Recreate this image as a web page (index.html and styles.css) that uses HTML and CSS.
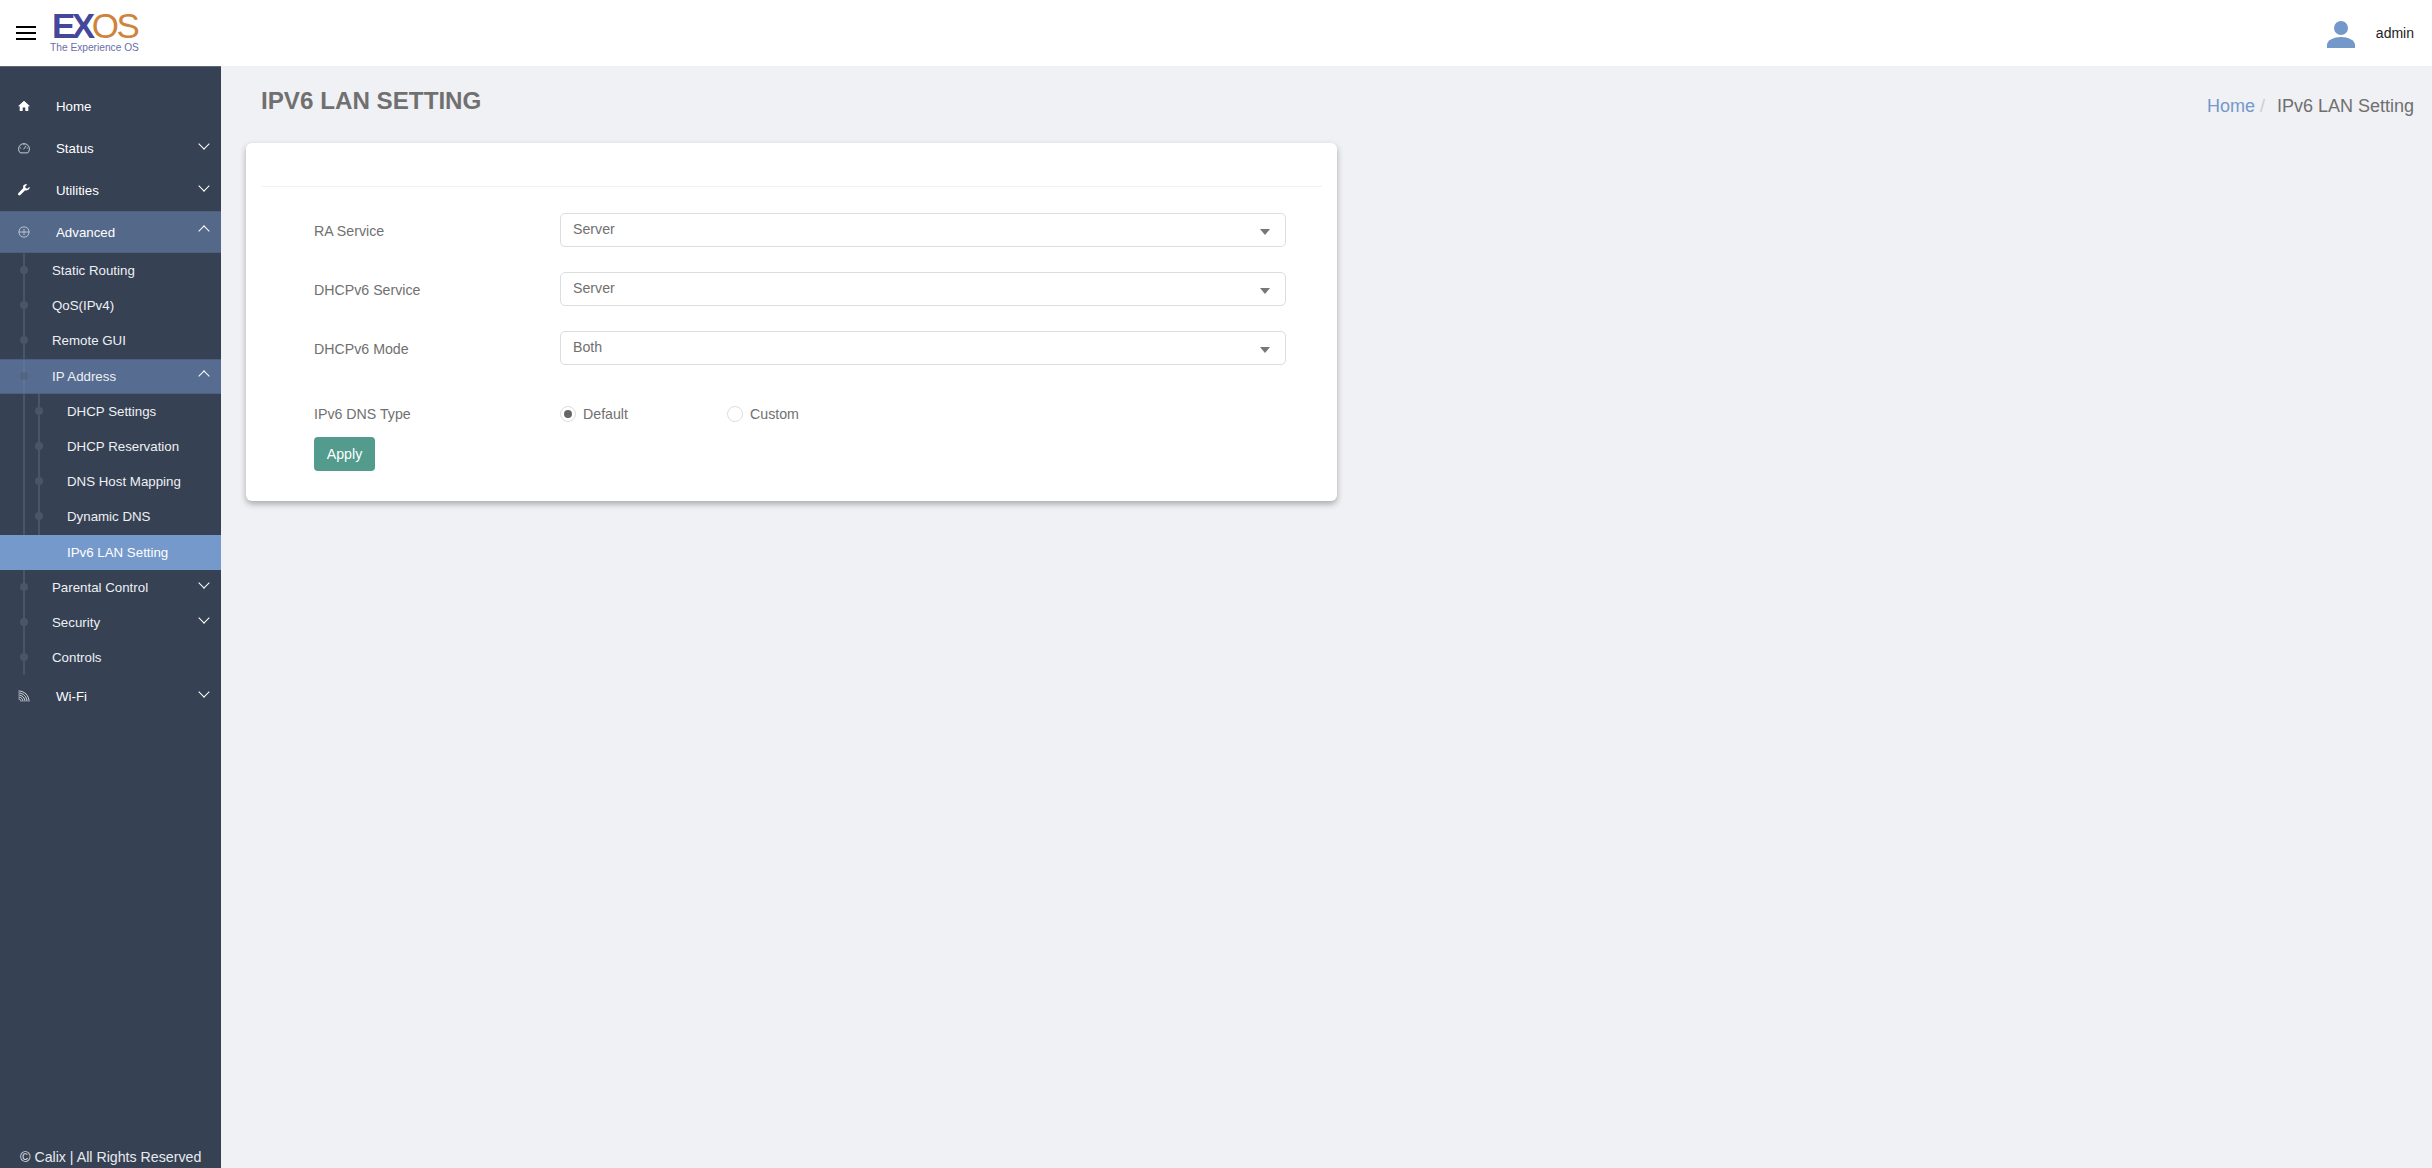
FILE: index.html
```html
<!DOCTYPE html>
<html lang="en">
<head>
    <meta charset="UTF-8">
    <title>IPv6 LAN Setting</title>
    <link rel="stylesheet" href="styles.css">
</head>
<body>
    <div class="topbar">
        <div class="burger"><span></span><span></span><span></span></div>
        <div class="logo">
            <div class="logoName"><b>EX</b><span>OS</span></div>
            <div class="logoTag">The Experience OS</div>
        </div>
        <div class="user">
            <svg class="userIcon" viewBox="0 0 28 28" width="28" height="28">
                <circle cx="14" cy="8" r="7" fill="#7398c9"/>
                <path d="M0 28v-3c0-5 7-8 14-8s14 3 14 8v3z" fill="#7398c9"/>
            </svg>
            <span class="userName">admin</span>
        </div>
    </div>
    <div class="layout">
        <div class="sidebar">
            <ul class="menu">
                <li class="item">
                    <svg class="icon" viewBox="0 0 12 12"><path d="M6 .8L0 6.200h1.700V11h3V7.600h2.600V11h3V6.200H12z" fill="#fff"/></svg>
                    <span>Home</span>
                </li>
                <li class="item">
                    <svg class="icon" viewBox="0 0 14 14" fill="none" stroke="#dfe3e8" stroke-width="1"><path d="M2.600 12.700a6.300 6.300 0 1 1 8.800 0z"/><path d="M6.500 8.500l3-4"/><path d="M2.500 7h1.200M10.300 7h1.200M7 2.500v1.200"/></svg>
                    <span>Status</span>
                    <i class="chev"></i>
                </li>
                <li class="item">
                    <svg class="icon" viewBox="0 0 14 14"><path d="M13.400 3.200l-2.500 2.200-2-.6-.5-2L10.800.6C9-.2 7 .4 6.200 2c-.4 1-.4 1.900 0 2.800L.6 10.600c-.8.800-.7 1.700-.1 2.300s1.600.7 2.300 0l5.600-5.700c1 .4 2 .4 3-.1 1.700-.8 2.500-2.400 2-3.900z" fill="#fff"/></svg>
                    <span>Utilities</span>
                    <i class="chev"></i>
                </li>
                <li class="item open">
                    <svg class="icon" viewBox="0 0 14 14" fill="none" stroke="#c9d1dc" stroke-width="1"><circle cx="7" cy="7" r="6"/><path d="M7 3.500v7M1 7h12"/></svg>
                    <span>Advanced</span>
                    <i class="chev up"></i>
                </li>
                <li>
                    <ul class="sub">
                        <li class="subItem">Static Routing</li>
                        <li class="subItem">QoS(IPv4)</li>
                        <li class="subItem">Remote GUI</li>
                        <li class="subItem open">IP Address<i class="chev up"></i></li>
                        <li>
                            <ul class="sub2">
                                <li class="subItem">DHCP Settings</li>
                                <li class="subItem">DHCP Reservation</li>
                                <li class="subItem">DNS Host Mapping</li>
                                <li class="subItem">Dynamic DNS</li>
                                <li class="subItem current">IPv6 LAN Setting</li>
                            </ul>
                        </li>
                        <li class="subItem">Parental Control<i class="chev"></i></li>
                        <li class="subItem">Security<i class="chev"></i></li>
                        <li class="subItem">Controls</li>
                    </ul>
                </li>
                <li class="item">
                    <svg class="icon" viewBox="0 0 12 12" fill="none" stroke="#e6e9ed" stroke-width=".9"><path d="M.5 1c6 0 10.500 4.500 10.500 10.500M.5 3c4.800 0 8.500 3.700 8.500 8.500M.5 5c3.500 0 6.500 3 6.500 6.500M.5 7c2.500 0 4.500 2 4.500 4.500M.5 9c1.500 0 2.500 1 2.500 2.500"/></svg>
                    <span>Wi-Fi</span>
                    <i class="chev"></i>
                </li>
            </ul>
            <div class="copyright">© Calix | All Rights Reserved</div>
        </div>
        <div class="content">
            <div class="pageHead">
                <h1>IPv6 LAN Setting</h1>
                <div class="crumbs">
                    <a>Home</a><em>/</em><span>IPv6 LAN Setting</span>
                </div>
            </div>
            <div class="card">
                <div class="cardHead"></div>
                <div class="form">
                    <div class="row">
                        <label>RA Service</label>
                        <div class="select">Server<i class="caret"></i></div>
                    </div>
                    <div class="row">
                        <label>DHCPv6 Service</label>
                        <div class="select">Server<i class="caret"></i></div>
                    </div>
                    <div class="row">
                        <label>DHCPv6 Mode</label>
                        <div class="select">Both<i class="caret"></i></div>
                    </div>
                    <div class="row radioRow">
                        <label>IPv6 DNS Type</label>
                        <div class="radios">
                            <div class="radio checked"><i></i>Default</div>
                            <div class="radio"><i></i>Custom</div>
                        </div>
                    </div>
                    <button class="apply">Apply</button>
                </div>
            </div>
        </div>
    </div>
</body>
</html>
```

FILE: styles.css
```css
*{
    margin: 0px;
    padding: 0px;
    box-sizing: border-box;
}
body{
    font-family: "Liberation Sans", Arial, sans-serif;
    background: #f0f1f5;
    height: 1168px;
    overflow: hidden;
}
ul{
    list-style: none;
}
.topbar{
    height: 66px;
    background: #fff;
    display: flex;
    align-items: center;
    padding-left: 16px;
}
.burger{
    width: 20px;
    display: flex;
    flex-direction: column;
    gap: 4px;
}
.burger span{
    height: 2px;
    background: #000;
}
.logo{
    margin-left: 14px;
    margin-top: -1px;
    width: 92px;
}
.logoName{
    font-size: 35px;
    line-height: 30px;
    height: 30px;
    padding-left: 2px;
    letter-spacing: -2.500px;
    color: #45479a;
}
.logoName b{
    letter-spacing: -3.500px;
}
.logoName span{
    color: #cf833d;
    font-weight: normal;
}
.logoTag{
    font-size: 10.200px;
    line-height: 14px;
    color: #6a6dad;
    white-space: nowrap;
}
.user{
    margin-left: auto;
    display: flex;
    align-items: center;
    padding-right: 18px;
}
.userIcon{
    margin-top: 2px;
}
.userName{
    margin-left: 21px;
    font-size: 14px;
    color: #222;
    margin-top: -1px;
}
.layout{
    display: flex;
    height: 1102px;
}
.sidebar{
    width: 221px;
    background: #364154;
    color: #fff;
    display: flex;
    flex-direction: column;
    padding-top: 18px;
    font-size: 13.300px;
    border-top: 1px solid #5d6775;
}
.menu{
    flex: 1;
}
.item{
    height: 42px;
    display: flex;
    align-items: center;
    padding-left: 18px;
    position: relative;
}
.item span{
    margin-left: 26px;
}
.icon{
    width: 12px;
    height: 12px;
}
.item.open{
    background: #54698a;
    border-top: 1px solid #4d607e;
    border-bottom: 1px solid #4d607e;
}
.chev{
    position: absolute;
    right: 13px;
    top: 13px;
    width: 8px;
    height: 8px;
    border-right: 1.500px solid #fff;
    border-bottom: 1.500px solid #fff;
    transform: rotate(45deg);
}
.chev.up{
    top: 15px;
    transform: rotate(225deg);
}
.sub{
    position: relative;
}
.sub::before{
    content: "";
    position: absolute;
    left: 23px;
    top: 0px;
    bottom: 0px;
    width: 2px;
    background: #495568;
}
.sub2{
    position: relative;
}
.sub2::before{
    content: "";
    position: absolute;
    left: 38px;
    top: 0px;
    bottom: 0px;
    width: 2px;
    background: #495568;
}
.subItem{
    height: 35.200px;
    line-height: 35.200px;
    padding-left: 52px;
    position: relative;
    color: #eef0f3;
}
.subItem::after{
    content: "";
    position: absolute;
    left: 20px;
    top: 13px;
    width: 8px;
    height: 8px;
    border-radius: 50%;
    background: #495568;
}
.sub2 .subItem{
    padding-left: 67px;
}
.sub2 .subItem::after{
    left: 35px;
}
.subItem.open{
    background: rgba(104,133,178,.65);
    border-top: 1px solid #4d607e;
    border-bottom: 1px solid #4d607e;
    line-height: 33.200px;
}
.subItem.open::after{
    top: 12px;
    background: rgba(73,85,104,.35);
}
.subItem .chev{
    top: 9px;
}
.subItem .chev.up{
    top: 12px;
}
.subItem.current{
    background: #7599cb;
    color: #fff;
}
.subItem.current::after{
    display: none;
}
.copyright{
    height: 21px;
    padding-left: 20px;
    font-size: 14.200px;
    line-height: 20px;
    color: #e8eaee;
}
.content{
    flex: 1;
    padding: 0px 18px 0px 25px;
}
.pageHead{
    height: 77px;
    display: flex;
    justify-content: space-between;
    align-items: center;
    padding-left: 15px;
}
.pageHead h1{
    font-size: 24.200px;
    font-weight: bold;
    text-transform: uppercase;
    color: #707070;
    margin-top: -8px;
}
.crumbs{
    font-size: 18px;
    color: #6f6f6f;
    margin-top: 3px;
}
.crumbs a{
    color: #7398c9;
}
.crumbs em{
    font-style: normal;
    color: #ccc;
    margin: 0px 12px 0px 5px;
}
.card{
    width: 1091px;
    height: 358px;
    background: #fff;
    border-radius: 6px;
    box-shadow: 0px 3px 6px rgba(0,0,0,.3);
    padding: 0px 15px;
}
.cardHead{
    height: 44px;
    border-bottom: 1px solid #f1f1f1;
}
.form{
    padding: 26px 0px 0px 53px;
    font-size: 14.200px;
    color: #707070;
}
.row{
    display: flex;
    align-items: center;
    height: 34px;
    margin-bottom: 25px;
}
.row label{
    width: 246px;
    padding-top: 1px;
}
.select{
    width: 726px;
    height: 34px;
    border: 1px solid #ddd;
    border-radius: 5px;
    padding-left: 12px;
    line-height: 31px;
    position: relative;
}
.caret{
    position: absolute;
    right: 15px;
    top: 15px;
    border-left: 5px solid transparent;
    border-right: 5px solid transparent;
    border-top: 6px solid #777;
}
.radioRow{
    height: 20px;
    margin: 38px 0px 14px;
}
.radios{
    display: flex;
    padding-top: 1px;
}
.radio{
    width: 167px;
    display: flex;
    align-items: center;
}
.radio i{
    width: 16px;
    height: 16px;
    border: 1px solid #ddd;
    border-radius: 50%;
    margin-right: 7px;
    position: relative;
}
.radio.checked i::after{
    content: "";
    position: absolute;
    left: 3px;
    top: 3px;
    width: 8px;
    height: 8px;
    border-radius: 50%;
    background: #666;
}
.apply{
    width: 61px;
    height: 34px;
    background: #529b8d;
    border: 0px;
    border-radius: 4px;
    color: #fff;
    font-family: inherit;
    font-size: 14.200px;
}
```
